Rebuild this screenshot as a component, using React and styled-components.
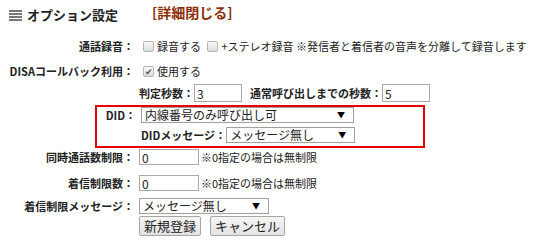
import React from 'react';
import styled, { createGlobalStyle } from 'styled-components';

const GlobalStyle = createGlobalStyle`
  body {
    margin: 0;
    background: #fff;
    font-family: "Noto Sans CJK JP", "Liberation Sans", sans-serif;
    font-size: 11px;
    line-height: 16px;
    color: #222;
  }
`;

function MenuIcon() {
  return (
    <svg width="13" height="11" viewBox="0 0 13 11">
      {[0, 3, 6, 9].map((y) => (
        <rect key={y} x="0" y={y} width="13" height="2" fill="#777" />
      ))}
    </svg>
  );
}

function Checkbox({ checked }) {
  return <Box>{checked ? '✔' : ''}</Box>;
}

function Select({ width, value }) {
  return (
    <SelectBox $w={width}>
      <span>{value}</span>
      <Arrow>▼</Arrow>
    </SelectBox>
  );
}

export default function App() {
  return (
    <Page>
      <GlobalStyle />
      <Header>
        <Title>
          <MenuIcon />
          <span>オプション設定</span>
        </Title>
        <DetailLink>[詳細閉じる]</DetailLink>
      </Header>

      <Row $mt={5}>
        <Label>通話録音：</Label>
        <Value>
          <Checkbox />
          <span>録音する&nbsp;</span>
          <Checkbox />
          <span>+ステレオ録音 ※発信者と着信者の音声を分離して録音します</span>
        </Value>
      </Row>

      <Row $mt={9}>
        <Label>DISAコールバック利用：</Label>
        <Value>
          <Checkbox checked />
          <span>使用する</span>
        </Value>
      </Row>

      <Row $mt={5}>
        <Label />
        <Value>
          <SubLabel>判定秒数：</SubLabel>
          <TextInput $w={48} $h={18} value="3" readOnly />
          <SubLabel $ml={8}>通常呼び出しまでの秒数：</SubLabel>
          <TextInput $w={48} $h={18} value="5" readOnly />
        </Value>
      </Row>

      <DidBox>
        <Row>
          <Label $w={39}>DID：</Label>
          <Value>
            <Select width={213} value="内線番号のみ呼び出し可" />
          </Value>
        </Row>
        <Row $mt={4}>
          <Label $w={39} />
          <Value>
            <SubLabel>DIDメッセージ：</SubLabel>
            <Select width={129} value="メッセージ無し" />
          </Value>
        </Row>
      </DidBox>

      <Row $mt={1}>
        <Label>同時通話数制限：</Label>
        <Value>
          <TextInput $w={60} $h={16} value="0" readOnly />
          <Note>※0指定の場合は無制限</Note>
        </Value>
      </Row>

      <Row $mt={10}>
        <Label>着信制限数：</Label>
        <Value>
          <TextInput $w={60} $h={16} value="0" readOnly />
          <Note>※0指定の場合は無制限</Note>
        </Value>
      </Row>

      <Row $mt={7}>
        <Label>着信制限メッセージ：</Label>
        <Value>
          <Select width={130} value="メッセージ無し" />
        </Value>
      </Row>

      <Row $mt={2}>
        <Label />
        <Value>
          <Button>新規登録</Button>
          <Button $ml={9}>キャンセル</Button>
        </Value>
      </Row>
    </Page>
  );
}

const Page = styled.div`
  width: 533px;
  height: 247px;
  overflow: hidden;
`;

const Header = styled.div`
  height: 33px;
  display: flex;
  align-items: flex-start;
  padding-left: 9px;
  box-sizing: border-box;
`;

const Title = styled.div`
  display: flex;
  align-items: center;
  gap: 5px;
  margin-top: 6px;
  font-size: 13px;
  line-height: 18px;
  font-weight: bold;
  color: #222;
`;

const DetailLink = styled.a`
  margin-left: 34px;
  margin-top: 4px;
  font-size: 14px;
  line-height: 16px;
  font-weight: bold;
  color: #8b2f08;
  cursor: pointer;
`;

const Row = styled.div`
  display: flex;
  align-items: center;
  min-height: 16px;
  margin-top: ${(p) => p.$mt || 0}px;
`;

const Label = styled.div`
  width: ${(p) => p.$w || 134}px;
  flex-shrink: 0;
  text-align: right;
  font-weight: bold;
  white-space: nowrap;
`;

const Value = styled.div`
  display: flex;
  align-items: center;
  margin-left: 5px;
  white-space: nowrap;
`;

const SubLabel = styled.span`
  font-weight: bold;
  margin-left: ${(p) => p.$ml || 0}px;
`;

const Box = styled.span`
  width: 11px;
  height: 11px;
  box-sizing: border-box;
  margin: 0 3px 0 4px;
  border: 1px solid #b5b5b5;
  border-radius: 2px;
  background: linear-gradient(#fafafa, #dcdcdc);
  color: #555;
  font-size: 9px;
  line-height: 9px;
  text-align: center;
`;

const TextInput = styled.input`
  width: ${(p) => p.$w}px;
  height: ${(p) => p.$h}px;
  box-sizing: border-box;
  margin: 0;
  padding: 0 2px;
  border: 1px solid #a9a9a9;
  background: #fff;
  font-family: inherit;
  font-size: 12px;
  color: #222;
  outline: none;
`;

const Note = styled.span`
  margin-left: 2px;
`;

const DidBox = styled.div`
  margin: 3px 0 0 95px;
  width: 330px;
  box-sizing: border-box;
  border: 2px solid #e60000;
  padding-bottom: 3px;
`;

const SelectBox = styled.div`
  width: ${(p) => p.$w}px;
  height: 16px;
  box-sizing: border-box;
  display: flex;
  align-items: center;
  padding: 0 8px 0 3px;
  border: 1px solid #a0a0a0;
  background: #fff;
  font-size: 12px;
  color: #222;
`;

const Arrow = styled.span`
  margin-left: auto;
  font-size: 8px;
  color: #000;
`;

const Button = styled.button`
  height: 20px;
  margin: 0 0 0 ${(p) => p.$ml || 0}px;
  padding: 0 4px;
  border: 1px solid #a6a6a6;
  border-radius: 2px;
  background: linear-gradient(#f6f6f6, #e2e2e2);
  font-family: inherit;
  font-size: 13px;
  line-height: 18px;
  color: #222;
  cursor: pointer;
`;
